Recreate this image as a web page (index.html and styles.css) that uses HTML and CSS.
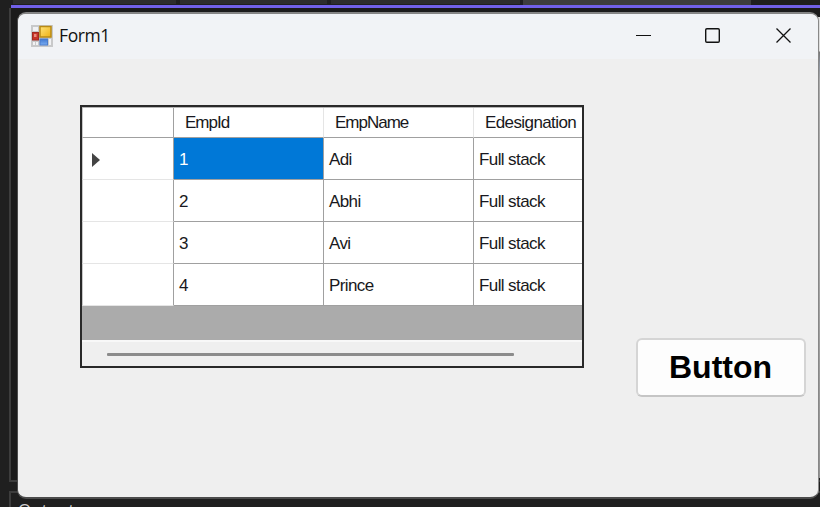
FILE: index.html
```html
<!DOCTYPE html>
<html lang="en">
<head>
<meta charset="utf-8">
<title>Form1</title>
<link rel="stylesheet" href="styles.css">
</head>
<body>
<div class="ide">
  <div class="ide-tabs"><i></i><i></i><i></i><i class="lit"></i></div>
  <div class="ide-accent"></div>
  <div class="ide-main"><div class="ide-editor"></div><div class="ide-side"></div></div>
  <div class="ide-output">Output</div>
</div>
<div class="window">
  <header class="titlebar">
    <svg class="app-icon" width="22" height="22" viewBox="0 0 22 22">
      <defs>
        <linearGradient id="gold" x1="0" y1="0" x2="1" y2="1"><stop offset="0" stop-color="#ffe37a"/><stop offset="1" stop-color="#eeb012"/></linearGradient>
        <linearGradient id="blue" x1="0" y1="0" x2="0" y2="1"><stop offset="0" stop-color="#3f77d0"/><stop offset="1" stop-color="#79adf2"/></linearGradient>
      </defs>
      <rect width="22" height="22" fill="#c8c9ca"/>
      <path d="M2 2h5v4H2zM2 17h2v3H2zM5 17h2v3H5zM18 14h2v6h-2z" fill="#f1f2f4"/>
      <rect x="9" y="1.500" width="11" height="10.500" fill="url(#gold)" stroke="#b98a14" stroke-width="1.500"/>
      <rect x="1.500" y="7.500" width="6" height="7.500" fill="#c73428" stroke="#a02b22"/>
      <rect x="3" y="9" width="2.500" height="3" fill="#e88b7d"/>
      <rect x="9" y="14" width="7.500" height="6" fill="url(#blue)" stroke="#4b7dcc"/>
    </svg>
    <span class="title">Form1</span>
    <svg class="controls" width="156" height="16" viewBox="0 0 156 16" fill="none" stroke="#111">
      <path d="M0 8.500h15"/>
      <rect x="69.700" y="1.700" width="13.600" height="13.600" rx="1.200" stroke-width="1.400"/>
      <path d="M140.500 1.500l14 14M154.500 1.500l-14 14" stroke-width="1.300"/>
    </svg>
  </header>
  <main class="client">
    <div class="datagrid">
      <div class="row head"><b></b><span class="tight">EmpId</span><span class="tight">EmpName</span><span>Edesignation</span></div>
      <div class="row"><b><svg width="8" height="14" viewBox="0 0 8 14"><path d="M0 0l8 7-8 7z" fill="#444"/></svg></b><span class="selected">1</span><span>Adi</span><span>Full stack</span></div>
      <div class="row"><b></b><span>2</span><span>Abhi</span><span>Full stack</span></div>
      <div class="row"><b></b><span>3</span><span>Avi</span><span>Full stack</span></div>
      <div class="row"><b></b><span>4</span><span>Prince</span><span>Full stack</span></div>
      <div class="blank"></div>
      <div class="scroll"><div class="thumb"></div></div>
    </div>
    <button class="btn" type="button">Button</button>
  </main>
</div>
</body>
</html>
```
FILE: styles.css
```css
* { box-sizing: border-box; }
body { margin: 0; width: 820px; height: 507px; overflow: hidden; background: #1f1f1f; position: relative; }

.ide { height: 507px; overflow: hidden; display: flex; flex-direction: column; }
.ide-tabs { display: grid; grid-template-columns: 163px 147px 189px 227px; column-gap: 4px; height: 5px; padding-left: 13px; }
.ide-tabs i { background: #2d2d2d; height: 4px; }
.ide-tabs .lit { background: #3d3d3d; height: 5px; margin-left: -1px; }
.ide-accent { height: 3px; flex: none; margin-left: 11px; background: #7160e8; }
.ide-main { display: flex; flex: none; height: 474px; margin-left: 9px; border-left: 2px solid #3d3d3d; border-bottom: 2px solid #3d3d3d; background: #1b1b1b; }
.ide-editor { flex: 1; }
.ide-side { width: 3px; margin-top: 9px; margin-bottom: 2px; background: linear-gradient(#dedede 0 34px, #777 35px, #8b929d 46px, #aaa 64px, #a5a5a5 250px, #929292); }
.ide-output { flex: none; height: 30px; margin: 9px 0 0 9px; padding: 6px 0 0 7px; border: solid #3d3d3d; border-width: 2px 0 0 2px; color: #d0d0d0; font: 17px/22px "Open Sans", sans-serif; }

.window { position: absolute; left: 17px; top: 12px; width: 802px; height: 487px; border: solid #4c4c4c; border-width: 2px 1px 2px; border-top-color: #858585; border-right-color: #888; border-radius: 9px; background: #efefef; overflow: hidden; }
.titlebar { display: flex; align-items: center; height: 45px; padding: 0 26px 2px 13px; background: #f1f3f6; }
.app-icon { flex: none; margin-top: 0; }
.title { margin: -2px 0 0 6px; color: #111; font: 17.500px/24px "Open Sans", "Noto Sans", sans-serif; letter-spacing: -.4px; }
.controls { margin: -2px 0 0 auto; }
.client { display: flex; align-items: flex-start; padding: 46px 12px 0 62px; }

.datagrid { width: 504px; height: 263px; border: 2px solid #292929; background: #ababab; font: 17px/20px "Liberation Sans", sans-serif; letter-spacing: -.6px; color: #181820; overflow: hidden; }
.row { display: grid; grid-template-columns: 92px 150px 150px 108px; height: 42px; background: #fff; }
.row > * { display: flex; align-items: center; border-right: 1px solid #a0a0a0; border-bottom: 1px solid #a0a0a0; }
.row > :last-child { border-right: 0; }
.row span { padding: 2px 0 0 5px; white-space: nowrap; }
.row b { padding: 3px 0 0 9px; border-bottom-color: #e5e5e5; border-left: 1px solid #c8c8c8; }
.head { height: 31px; border-top: 1px solid #b5b5b5; }
.head b { border-bottom-color: #a0a0a0; }
.head span { padding: 1px 0 0 11px; border-right-color: #e5e5e5; }
.head .tight { letter-spacing: -1px; }
.row .selected { background: #0078d7; color: #fff; }
.blank { height: 34px; }
.scroll { height: 26px; padding: 12px 0 0 25px; background: #efefef; border-top: 2px solid #f8f8f8; }
.thumb { width: 407px; height: 3px; margin-top: -1px; border-radius: 1px; background: #8b8b8b; }

.btn { width: 170px; height: 59px; margin: 233px 0 0 52px; padding: 0 1px 2px 0; border: 2px solid #d5d5d5; border-bottom-color: #c5c5c5; border-radius: 6px; background: #fdfdfd; color: #000; font: bold 32px/36px "Liberation Sans", sans-serif; flex: none; }
```
